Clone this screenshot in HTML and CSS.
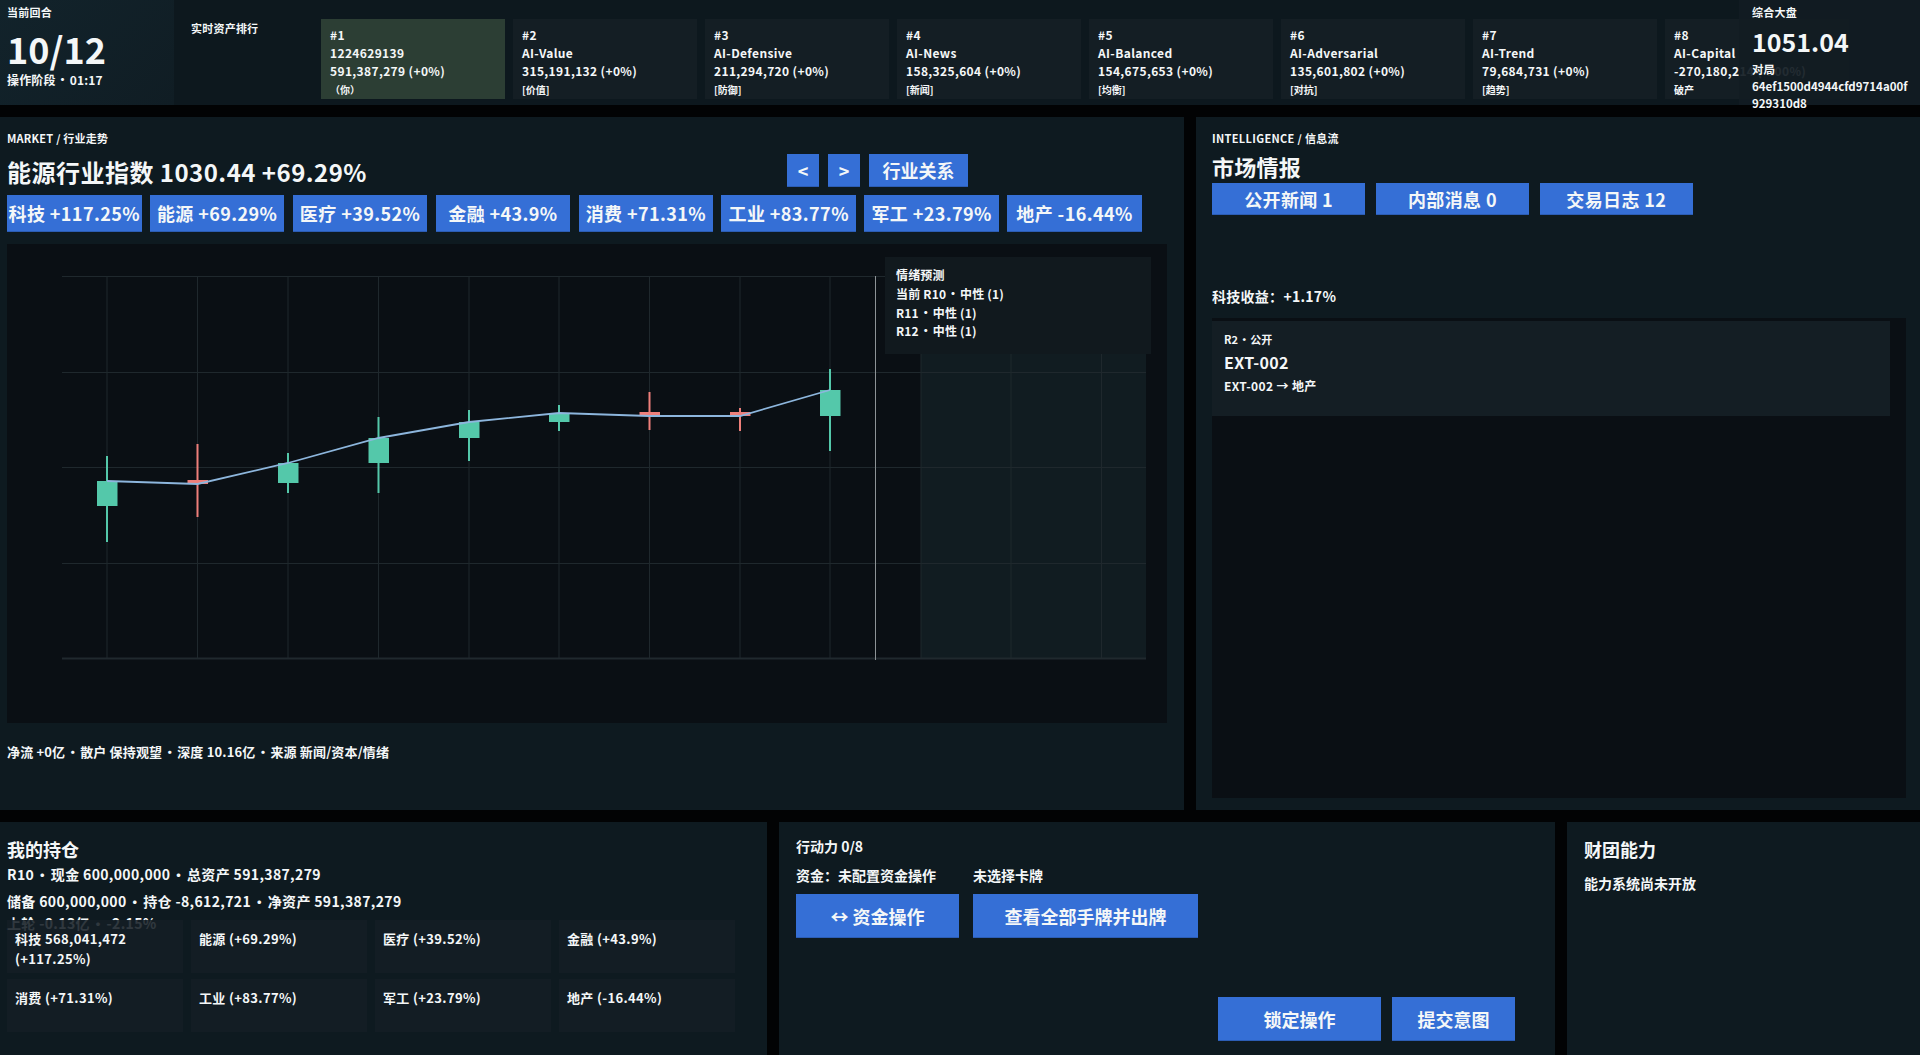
FILE: index.html
```html
<!DOCTYPE html>
<html lang="en">
<head>
    <meta charset="UTF-8">
    <meta name="viewport" content="width=device-width, initial-scale=1.0">
    <title>行业走势</title>
    <link rel="stylesheet" href="styles.css">
</head>
<body>
    <!-- Top bar -->
    <header class="topbar">
        <div class="round-box">
            <div class="tiny-label">当前回合</div>
            <div class="round-num">10/12</div>
            <div class="round-phase">操作阶段 <span class="dot">·</span> 01:17</div>
        </div>
        <div class="rank-title">实时资产排行</div>
        <div class="rank-list">
            <div class="rank-card me">#1<br>1224629139<br>591,387,279 (+0%)<br><span class="rank-tag">（你）</span></div>
            <div class="rank-card">#2<br>AI-Value<br>315,191,132 (+0%)<br><span class="rank-tag">[价值]</span></div>
            <div class="rank-card">#3<br>AI-Defensive<br>211,294,720 (+0%)<br><span class="rank-tag">[防御]</span></div>
            <div class="rank-card">#4<br>AI-News<br>158,325,604 (+0%)<br><span class="rank-tag">[新闻]</span></div>
            <div class="rank-card">#5<br>AI-Balanced<br>154,675,653 (+0%)<br><span class="rank-tag">[均衡]</span></div>
            <div class="rank-card">#6<br>AI-Adversarial<br>135,601,802 (+0%)<br><span class="rank-tag">[对抗]</span></div>
            <div class="rank-card">#7<br>AI-Trend<br>79,684,731 (+0%)<br><span class="rank-tag">[趋势]</span></div>
            <div class="rank-card">#8<br>AI-Capital<br>-270,180,214 (-100%)<br><span class="rank-tag">破产</span></div>
        </div>
        <div class="index-box">
            <div class="tiny-label">综合大盘</div>
            <div class="index-num">1051.04</div>
            <div class="index-match">对局<br>64ef1500d4944cfd9714a00f929310d8</div>
        </div>
    </header>

    <!-- Market + intelligence -->
    <main class="middle">
        <section class="panel market">
            <div class="tiny-label">MARKET / 行业走势</div>
            <div class="market-head">
                <h2 class="market-title">能源行业指数 1030.44 +69.29%</h2>
                <button class="btn nav-btn">&lt;</button>
                <button class="btn nav-btn">&gt;</button>
                <button class="btn rel-btn">行业关系</button>
            </div>
            <div class="sector-tags">
                <button class="btn tag-btn">科技 +117.25%</button>
                <button class="btn tag-btn">能源 +69.29%</button>
                <button class="btn tag-btn">医疗 +39.52%</button>
                <button class="btn tag-btn">金融 +43.9%</button>
                <button class="btn tag-btn">消费 +71.31%</button>
                <button class="btn tag-btn">工业 +83.77%</button>
                <button class="btn tag-btn">军工 +23.79%</button>
                <button class="btn tag-btn">地产 -16.44%</button>
            </div>
            <div class="chart">
                <svg class="chart-svg" viewBox="7 244 1160 479" width="1160" height="479">
                    <rect x="921" y="276" width="225" height="382" fill="#111c21"/>
                    <g stroke="#1f282d" stroke-width="1">
                        <path d="M62 276.5H1146M62 372.5H1146M62 467.5H1146M62 563.5H1146"/>
                        <path d="M107 276V658M197.5 276V658M288 276V658M378.5 276V658M469 276V658M559 276V658M649.5 276V658M740 276V658M830 276V658M921 276V658M1011 276V658M1101.5 276V658"/>
                    </g>
                    <path d="M62 658.5H1146" stroke="#20292e" stroke-width="2"/>
                    <path d="M875.5 276V660" stroke="#8d9396" stroke-width="1"/>
                    <g fill="#54c8aa">
                        <rect x="106" y="456" width="2" height="86"/><rect x="97" y="481" width="20.5" height="25"/>
                        <rect x="287" y="453" width="2" height="40"/><rect x="278" y="463" width="20.5" height="20"/>
                        <rect x="377.5" y="417" width="2" height="76"/><rect x="368.5" y="438" width="20.5" height="25"/>
                        <rect x="468" y="410" width="2" height="51"/><rect x="459" y="422" width="20.5" height="16"/>
                        <rect x="558" y="405" width="2" height="26"/><rect x="549" y="413" width="20.5" height="9"/>
                        <rect x="829" y="369" width="2" height="82"/><rect x="820" y="390" width="20.5" height="26"/>
                    </g>
                    <g fill="#ee7f7a">
                        <rect x="196.5" y="444" width="2" height="73"/><rect x="187.5" y="480" width="20.5" height="4"/>
                        <rect x="648.5" y="392" width="2" height="38"/><rect x="639.5" y="412" width="20.5" height="4"/>
                        <rect x="739" y="408" width="2" height="23"/><rect x="730" y="412" width="20.5" height="4"/>
                    </g>
                    <polyline points="107,481 197.5,484 288,463 378.5,438 469,422 559,413 649,416 740,416 830,390" fill="none" stroke="#8db6dd" stroke-width="1.8"/>
                </svg>
                <div class="forecast">
                    <div class="forecast-title">情绪预测</div>
                    <div>当前 R10 <span class="dot">·</span> 中性 (1)</div>
                    <div>R11 <span class="dot">·</span> 中性 (1)</div>
                    <div>R12 <span class="dot">·</span> 中性 (1)</div>
                </div>
            </div>
            <p class="market-foot">净流 +0亿 <span class="dot">·</span> 散户 保持观望 <span class="dot">·</span> 深度 10.16亿 <span class="dot">·</span> 来源 新闻/资本/情绪</p>
        </section>

        <section class="panel intel">
            <div class="tiny-label">INTELLIGENCE / 信息流</div>
            <h2 class="intel-title">市场情报</h2>
            <div class="intel-tabs">
                <button class="btn tab-btn">公开新闻 1</button>
                <button class="btn tab-btn">内部消息 0</button>
                <button class="btn tab-btn">交易日志 12</button>
            </div>
            <div class="intel-stat">科技收益：+1.17%</div>
            <div class="news-list">
                <div class="news-card">
                    <div class="news-meta">R2 <span class="dot">·</span> 公开</div>
                    <div class="news-name">EXT-002</div>
                    <div class="news-desc">EXT-002 → 地产</div>
                </div>
            </div>
        </section>
    </main>

    <!-- Bottom row -->
    <footer class="bottom">
        <section class="panel holdings">
            <h3 class="sub-title">我的持仓</h3>
            <div class="hold-summary">
                <div class="hold-line first">R10 <span class="dot">·</span> 现金 600,000,000 <span class="dot">·</span> 总资产 591,387,279</div>
                <div class="hold-line">储备 600,000,000 <span class="dot">·</span> 持仓 -8,612,721 <span class="dot">·</span> 净资产 591,387,279</div>
                <div class="hold-line">上轮 -0.13亿 <span class="dot">·</span> -2.15%</div>
            </div>
            <div class="hold-grid">
                <div class="hold-card">科技 568,041,472 (+117.25%)</div>
                <div class="hold-card">能源 (+69.29%)</div>
                <div class="hold-card">医疗 (+39.52%)</div>
                <div class="hold-card">金融 (+43.9%)</div>
                <div class="hold-card">消费 (+71.31%)</div>
                <div class="hold-card">工业 (+83.77%)</div>
                <div class="hold-card">军工 (+23.79%)</div>
                <div class="hold-card">地产 (-16.44%)</div>
            </div>
        </section>

        <section class="panel actions">
            <div class="action-power">行动力 0/8</div>
            <div class="action-info">
                <span>资金：未配置资金操作</span>
                <span>未选择卡牌</span>
            </div>
            <div class="action-btns">
                <button class="btn act-btn">↔ 资金操作</button>
                <button class="btn act-btn">查看全部手牌并出牌</button>
            </div>
            <div class="submit-row">
                <button class="btn lock-btn">锁定操作</button>
                <button class="btn send-btn">提交意图</button>
            </div>
        </section>

        <section class="panel ability">
            <h3 class="sub-title">财团能力</h3>
            <p class="ability-note">能力系统尚未开放</p>
        </section>
    </footer>
</body>
</html>
```

FILE: styles.css
```css
* {
    margin: 0;
    padding: 0;
    box-sizing: border-box;
}

body {
    font-family: "Noto Sans CJK SC", "Noto Sans", sans-serif;
    font-weight: 700;
    background: #020304;
    color: #f4f7f8;
    width: 1920px;
    height: 1055px;
    overflow: hidden;
    display: flex;
    flex-direction: column;
    gap: 12px;
}

.panel {
    background: #0e1a20;
}

.tiny-label {
    font-size: 11px;
    line-height: 16px;
    letter-spacing: 0.02em;
}

.dot {
    margin: 0 -0.17em;
}

.btn {
    font-family: inherit;
    font-weight: 700;
    color: #f4f7f8;
    background: #356fd6;
    border: none;
    border-bottom: 1px solid #2c5db4;
    font-size: 18px;
    white-space: nowrap;
}

/* Top bar */
.topbar {
    height: 105px;
    flex: none;
    display: flex;
    position: relative;
    background: #0d181e;
}

.round-box {
    width: 174px;
    flex: none;
    padding: 4px 7px 0;
    background: linear-gradient(135deg, #12232b, #101d24);
}

.round-num {
    font-size: 36px;
    line-height: 40px;
    margin-top: 8px;
}

.round-phase {
    font-size: 12px;
    line-height: 16px;
    margin-top: 4px;
    letter-spacing: 0.015em;
}

.rank-title {
    width: 147px;
    flex: none;
    padding: 20px 0 0 17px;
    font-size: 11px;
    line-height: 16px;
    letter-spacing: 0.02em;
}

.rank-list {
    display: flex;
    gap: 8px;
    padding-top: 19px;
    overflow: hidden;
}

.rank-card {
    width: 184px;
    height: 80px;
    flex: none;
    padding: 7px 9px 0;
    background: #141e24;
    font-size: 12px;
    line-height: 18px;
    letter-spacing: 0.03em;
    white-space: nowrap;
}

.rank-card.me {
    background: #2c3e34;
}

.rank-tag {
    font-size: 10px;
    letter-spacing: 0;
}

.index-box {
    position: absolute;
    top: 0;
    right: 0;
    width: 181px;
    height: 105px;
    padding: 4px 10px 0 13px;
    background: rgba(18, 28, 34, 0.93);
}

.index-num {
    font-size: 25px;
    line-height: 34px;
    margin-top: 4px;
}

.index-match {
    font-size: 11.5px;
    line-height: 17px;
    margin-top: 3px;
    word-break: break-all;
}

/* Middle row */
.middle {
    height: 693px;
    flex: none;
    display: flex;
    gap: 12px;
}

.market {
    width: 1184px;
    flex: none;
    padding: 13px 17px 0 7px;
}

.market-head {
    display: flex;
    gap: 9px;
    margin-top: 8px;
    height: 33px;
}

.market-title {
    width: 771px;
    flex: none;
    font-size: 24px;
    line-height: 36px;
    letter-spacing: 0.02em;
}

.nav-btn {
    width: 32px;
}

.rel-btn {
    width: 99px;
}

.sector-tags {
    display: grid;
    grid-template-columns: repeat(8, 134.5px);
    gap: 8.4px;
    margin-top: 8px;
}

.tag-btn {
    height: 37px;
    letter-spacing: 0.022em;
}

.chart {
    position: relative;
    height: 479px;
    margin-top: 12px;
    background: #0a0f14;
}

.chart-svg {
    display: block;
}

.forecast {
    position: absolute;
    top: 13px;
    left: 878px;
    width: 266px;
    height: 97px;
    padding: 9px 11px;
    background: #11191e;
    font-size: 12px;
    line-height: 18.4px;
    letter-spacing: 0.015em;
}

.forecast-title {
    margin-bottom: 1px;
}

.market-foot {
    font-size: 13px;
    line-height: 18px;
    margin-top: 20px;
    letter-spacing: 0.012em;
}

.intel {
    flex: 1;
    display: flex;
    flex-direction: column;
    padding: 13px 14px 12px 16px;
}

.intel .tiny-label {
    letter-spacing: 0.03em;
}

.intel-title {
    font-size: 22px;
    line-height: 30px;
    margin: 5px 0 2px;
    letter-spacing: 0.01em;
}

.intel-tabs {
    display: flex;
    gap: 10.5px;
}

.tab-btn {
    width: 153.3px;
    height: 32px;
    letter-spacing: 0.02em;
}

.intel-stat {
    font-size: 14px;
    line-height: 20px;
    margin-top: 71px;
    letter-spacing: 0.02em;
}

.news-list {
    flex: 1;
    margin-top: 12px;
    padding: 3px 16px 0 0;
    background: #0a0f14;
}

.news-card {
    height: 95px;
    padding: 10px 12px;
    background: #141e24;
}

.news-meta {
    font-size: 11px;
    line-height: 16px;
}

.news-name {
    font-size: 16px;
    line-height: 24px;
    margin-top: 3px;
    letter-spacing: 0.02em;
}

.news-desc {
    font-size: 12px;
    line-height: 18px;
    margin-top: 3px;
    letter-spacing: 0.03em;
}

/* Bottom row */
.bottom {
    flex: 1;
    display: flex;
    gap: 12px;
}

.sub-title {
    font-size: 18px;
    line-height: 28px;
}

.holdings {
    width: 767px;
    flex: none;
    padding: 13px 7px 0;
}

.hold-summary {
    height: 57px;
}

.hold-line {
    font-size: 14px;
    line-height: 22px;
    letter-spacing: 0.025em;
}

.hold-line.first {
    margin-bottom: 5px;
}

.hold-grid {
    display: grid;
    grid-template-columns: repeat(4, 176px);
    grid-auto-rows: 53px;
    gap: 6px 8px;
}

.hold-card {
    position: relative;
    padding: 9px 8px;
    background: rgba(20, 30, 36, 0.88);
    font-size: 13px;
    line-height: 20px;
    letter-spacing: 0.027em;
}

.actions {
    width: 776px;
    flex: none;
    display: flex;
    flex-direction: column;
    padding: 15px 40px 14px 17px;
}

.action-power,
.action-info {
    font-size: 14px;
    line-height: 18px;
}

.action-info,
.action-btns {
    display: grid;
    grid-template-columns: 163px 225px;
    gap: 14px;
}

.action-info {
    margin-top: 11px;
}

.action-btns {
    margin-top: 10px;
}

.act-btn,
.lock-btn,
.send-btn {
    height: 44px;
}

.submit-row {
    display: flex;
    justify-content: flex-end;
    gap: 11px;
    margin-top: auto;
}

.lock-btn {
    width: 163px;
}

.send-btn {
    width: 123px;
}

.ability {
    flex: 1;
    padding: 13px 17px;
}

.ability-note {
    font-size: 14px;
    line-height: 18px;
    margin-top: 11px;
}
```
